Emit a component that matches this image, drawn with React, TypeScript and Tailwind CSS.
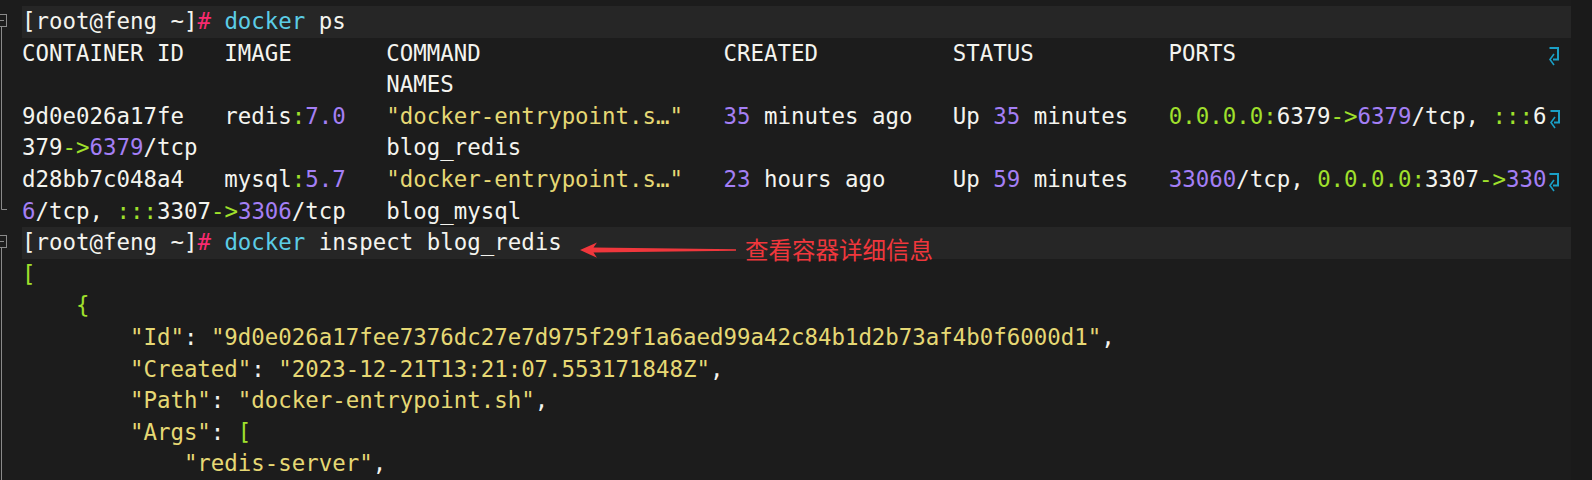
import React from "react";

const wh = "text-[#f4f4ef]";
const ye = "text-[#e6d874]";
const gr = "text-[#a0e02c]";
const pu = "text-[#a47ff5]";
const pk = "text-[#f92a6f]";
const cy = "text-[#5ccde6]";

type Seg = [string, string];

function Wrap() {
  return (
    <span className="inline-block align-top h-[31.6px] w-[13.5px]">
      <svg className="block mt-[9px] ml-[2px]" width="11" height="20" viewBox="0 0 11 20">
        <path d="M1.5 1 H10 V12.5 H5" fill="none" stroke="#1a9fc6" strokeWidth="2" />
        <path d="M6 7 L2 12.5 L6 18" fill="none" stroke="#1a9fc6" strokeWidth="1.6" />
      </svg>
    </span>
  );
}

function Row({ segs, bar, wrap }: { segs: Seg[]; bar?: boolean; wrap?: boolean }) {
  return (
    <div
      className={
        bar
          ? "h-[31.6px] leading-[31.6px] whitespace-pre bg-[#262626]"
          : "h-[31.6px] leading-[31.6px] whitespace-pre"
      }
    >
      {segs.map((s, i) => (
        <span key={i} className={s[1]}>
          {s[0]}
        </span>
      ))}
      {wrap ? <Wrap /> : null}
    </div>
  );
}

function Prompt(cmd: string): Seg[] {
  return [
    ["[root@feng ~]", wh],
    ["#", pk],
    [" ", wh],
    ["docker", cy],
    [cmd, wh],
  ];
}

export default function App() {
  const rows: { segs: Seg[]; bar?: boolean; wrap?: boolean }[] = [
    { segs: Prompt(" ps"), bar: true },
    {
      segs: [
        [
          "CONTAINER ID   IMAGE       COMMAND                  CREATED          STATUS          PORTS                       ",
          wh,
        ],
      ],
      wrap: true,
    },
    { segs: [["                           NAMES", wh]] },
    {
      segs: [
        ["9d0e026a17fe   redis", wh],
        [":", gr],
        ["7.0", pu],
        ["   ", wh],
        ['"docker-entrypoint.s\u2026"', ye],
        ["   ", wh],
        ["35", pu],
        [" minutes ago   Up ", wh],
        ["35", pu],
        [" minutes   ", wh],
        ["0.0.0.0:", gr],
        ["6379", wh],
        ["->", gr],
        ["6379", pu],
        ["/tcp, ", wh],
        [":::", gr],
        ["6", wh],
      ],
      wrap: true,
    },
    {
      segs: [
        ["379", wh],
        ["->", gr],
        ["6379", pu],
        ["/tcp              blog_redis", wh],
      ],
    },
    {
      segs: [
        ["d28bb7c048a4   mysql", wh],
        [":", gr],
        ["5.7", pu],
        ["   ", wh],
        ['"docker-entrypoint.s\u2026"', ye],
        ["   ", wh],
        ["23", pu],
        [" hours ago     Up ", wh],
        ["59", pu],
        [" minutes   ", wh],
        ["33060", pu],
        ["/tcp, ", wh],
        ["0.0.0.0:", gr],
        ["3307", wh],
        ["->", gr],
        ["330", pu],
      ],
      wrap: true,
    },
    {
      segs: [
        ["6", pu],
        ["/tcp, ", wh],
        [":::", gr],
        ["3307", wh],
        ["->", gr],
        ["3306", pu],
        ["/tcp   blog_mysql", wh],
      ],
    },
    { segs: Prompt(" inspect blog_redis"), bar: true },
    { segs: [["[", gr]] },
    { segs: [["    {", gr]] },
    {
      segs: [
        ['        "Id"', ye],
        [": ", wh],
        ['"9d0e026a17fee7376dc27e7d975f29f1a6aed99a42c84b1d2b73af4b0f6000d1"', ye],
        [",", wh],
      ],
    },
    {
      segs: [
        ['        "Created"', ye],
        [": ", wh],
        ['"2023-12-21T13:21:07.553171848Z"', ye],
        [",", wh],
      ],
    },
    {
      segs: [
        ['        "Path"', ye],
        [": ", wh],
        ['"docker-entrypoint.sh"', ye],
        [",", wh],
      ],
    },
    {
      segs: [
        ['        "Args"', ye],
        [": ", wh],
        ["[", gr],
      ],
    },
    {
      segs: [
        ['            "redis-server"', ye],
        [",", wh],
      ],
    },
  ];

  return (
    <div className="flex h-[480px] w-[1592px] overflow-hidden bg-[#1c1c1c]">
      <div className="w-[22px] shrink-0">
        <svg width="22" height="480" viewBox="0 0 22 480" className="block">
          <g fill="none" stroke="#8a8a8a" strokeWidth="1">
            <rect x="-5.5" y="14.5" width="12" height="12" />
            <path d="M-3 20.5 H4" />
            <path d="M1.5 27 V209.5 H7" />
            <rect x="-5.5" y="235.5" width="12" height="12" />
            <path d="M-3 241.5 H4" />
            <path d="M1.5 248 V480" />
          </g>
        </svg>
      </div>
      <div className="relative w-[1549px] shrink-0 pt-[6px] font-['DejaVu_Sans_Mono',monospace] text-[22.42px]">
        {rows.map((r, i) => (
          <Row key={i} segs={r.segs} bar={r.bar} wrap={r.wrap} />
        ))}
        <div className="absolute left-[556px] top-[236px] flex items-center gap-[5px]">
          <svg width="162" height="20" viewBox="0 0 162 20" className="block">
            <polygon
              points="2,10 19,2.5 15.5,7.6 158,9.2 158,10.8 15.5,12.6 19,17.8"
              fill="#f0373c"
            />
          </svg>
          <span className="font-['Noto_Sans_CJK_SC',sans-serif] text-[23.5px] leading-[27px] text-[#f0373c]">
            查看容器详细信息
          </span>
        </div>
      </div>
      <div className="w-[21px] shrink-0 bg-[#1a1a1a]" />
    </div>
  );
}
